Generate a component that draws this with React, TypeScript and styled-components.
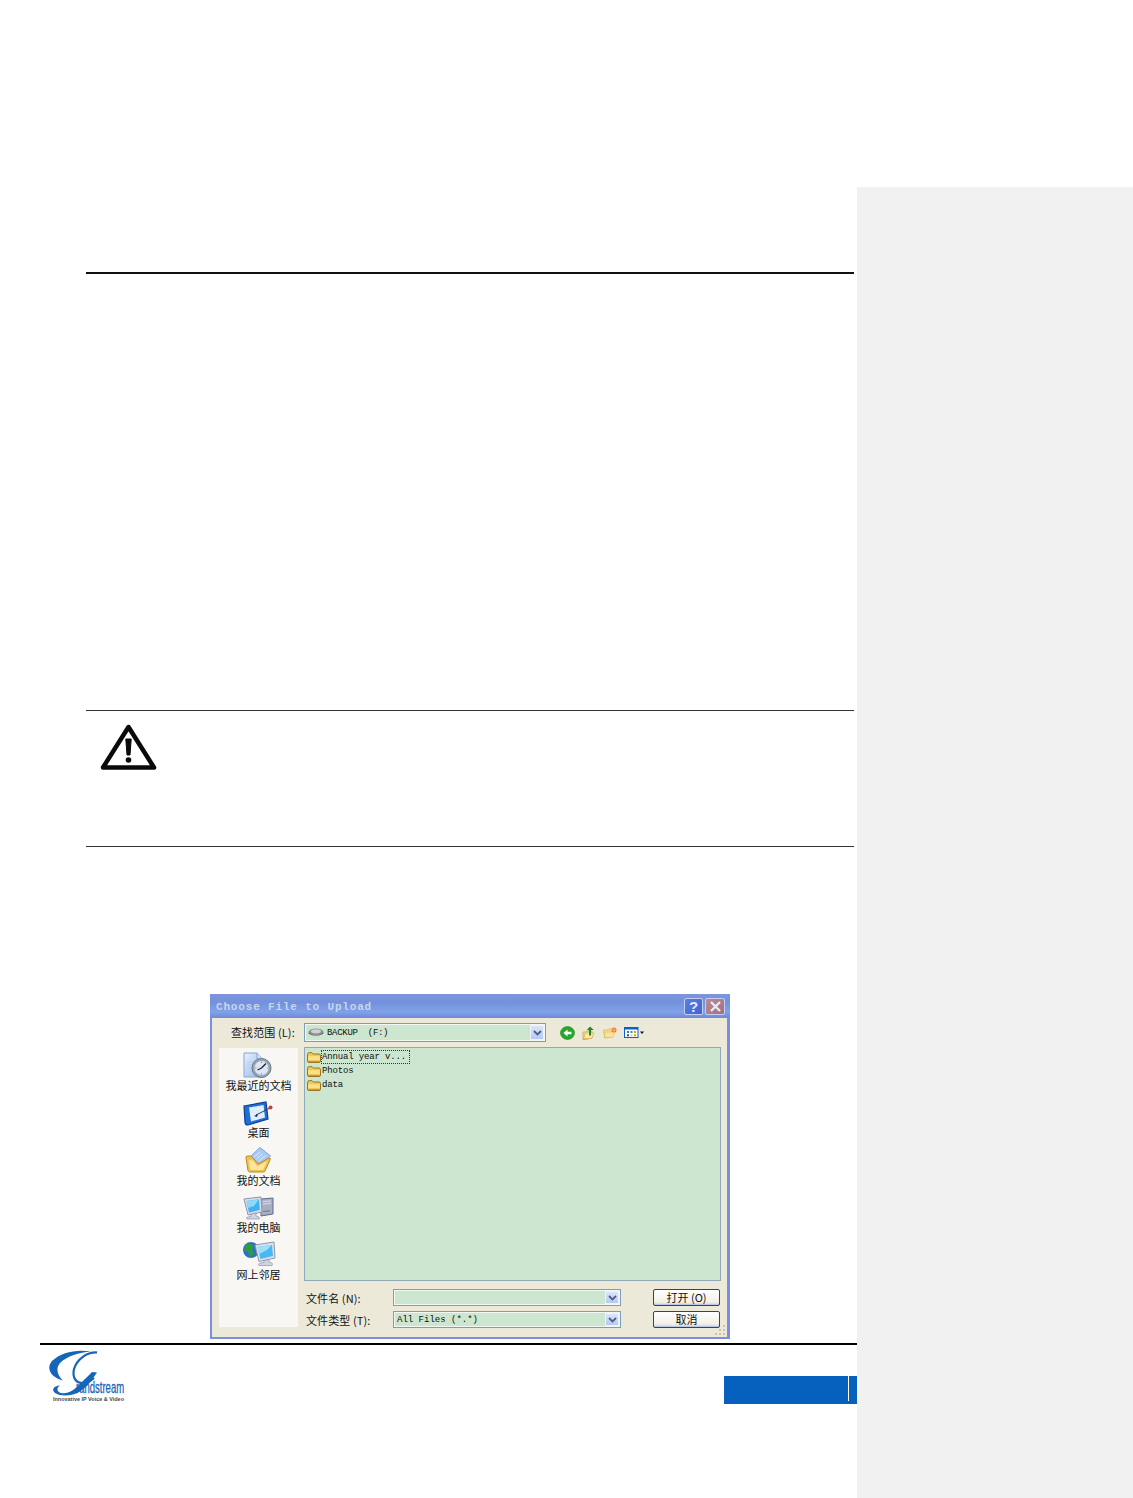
import React from "react";
import styled, { createGlobalStyle } from "styled-components";

const Global = createGlobalStyle`
  html, body { margin: 0; padding: 0; background: #fff; }
  body { font-family: "Liberation Sans", "Noto Sans CJK SC", sans-serif; }
`;

const Page = styled.div`
  display: flex;
  width: 1133px;
  height: 1498px;
  overflow: hidden;
`;
const Main = styled.main`
  width: 857px;
  padding-top: 272px;
  display: flex;
  flex-direction: column;
  align-items: flex-start;
  box-sizing: border-box;
`;
const CommentPane = styled.aside`
  width: 276px;
  margin-top: 187px;
  background: #f1f1f1;
`;
const TopRule = styled.hr`
  margin: 0 0 0 86px;
  width: 768px;
  height: 2px;
  border: 0;
  background: #111;
`;
const Warning = styled.section`
  margin: 436px 0 0 86px;
  width: 768px;
  height: 137px;
  box-sizing: border-box;
  border-top: 1px solid #333;
  border-bottom: 1px solid #333;
  padding: 12px 0 0 14px;
`;
const Dialog = styled.div`
  position: relative;
  margin: 147px 0 0 210px;
  width: 520px;
  height: 345px;
  box-sizing: border-box;
  border-left: 2px solid #7a8fdd;
  border-right: 3px solid #7a8fdd;
  border-bottom: 2px solid #7a8fdd;
  background: #ece9d8;
  display: flex;
  flex-direction: column;
`;
const TitleBar = styled.div`
  height: 24px;
  flex: none;
  margin: 0 -3px 0 -2px;
  padding: 0 5px 0 6px;
  display: flex;
  align-items: center;
  justify-content: space-between;
  background: linear-gradient(180deg, #7f95dc 0%, #7391dc 35%, #80a2e8 75%, #7089d8 100%);
`;
const Title = styled.span`
  font: bold 11px "Liberation Mono", monospace;
  letter-spacing: 0.83px;
  color: #c6d6ec;
  padding-top: 2px;
`;
const CaptionButtons = styled.div`
  display: flex;
  gap: 2px;
`;
const CaptionButton = styled.div<{ $kind: "help" | "close" }>`
  width: ${(p) => (p.$kind === "help" ? "19px" : "20px")};
  height: 17px;
  box-sizing: border-box;
  border: 1px solid #c3cfee;
  border-radius: 2px;
  display: flex;
  align-items: center;
  justify-content: center;
  background: ${(p) => (p.$kind === "help" ? "linear-gradient(135deg,#5a7fe0,#3f63d2)" : "linear-gradient(135deg,#b98a98,#a86f80)")};
  color: #e9ecf6;
  font: bold 15px "Liberation Sans", sans-serif;
`;
const LookRow = styled.div`
  height: 29px;
  flex: none;
  display: flex;
  align-items: center;
  padding: 0 0 0 19px;
  box-sizing: border-box;
`;
const Label = styled.span`
  font: 11px "Noto Sans CJK SC", sans-serif;
  letter-spacing: 0.1px;
  color: #111;
  white-space: pre;
  line-height: 14px;
`;
const LookLabel = styled(Label)`
  width: 73px;
  flex: none;
  margin-top: -2px;
`;
const Combo = styled.div<{ $w?: number }>`
  width: ${(p) => (p.$w ? `${p.$w}px` : "100%")};
  height: ${(p) => (p.$w ? "19px" : "17px")};
  flex: none;
  box-sizing: border-box;
  border: 1px solid #7f9db9;
  background: #cde6cf;
  box-shadow: inset 0 0 0 1px #f2f7f2;
  display: flex;
  align-items: center;
  justify-content: space-between;
  padding: 0 1px 0 3px;
  font: 9px "Liberation Mono", monospace;
  color: #111;
  white-space: pre;
`;
const ComboValue = styled.span`
  display: flex;
  align-items: center;
  gap: 3px;
  letter-spacing: -0.3px;
`;
const Arrow = styled.span`
  width: 14px;
  height: calc(100% - 2px);
  flex: none;
  background: linear-gradient(180deg, #dbe5fb, #b6c9f5);
  border: 1px solid #eef2fc;
  box-sizing: border-box;
  display: flex;
  align-items: center;
  justify-content: center;
`;
const Toolbar = styled.div`
  display: flex;
  align-items: center;
  gap: 7px;
  margin-left: 14px;
`;
const Middle = styled.div`
  display: flex;
  gap: 6px;
  padding-left: 7px;
`;
const Places = styled.nav`
  width: 79px;
  height: 279px;
  margin-top: 1px;
  flex: none;
  box-sizing: border-box;
  padding-top: 3px;
  background: #f8f7f3;
  display: flex;
  flex-direction: column;
  gap: 4.25px;
  align-items: center;
`;
const Place = styled.div`
  height: 43px;
  display: flex;
  flex-direction: column;
  align-items: center;
`;
const PlaceLabel = styled.span`
  margin-top: -1px;
  font: 11px/15px "Noto Sans CJK SC", sans-serif;
  color: #111;
  white-space: nowrap;
`;
const Right = styled.div`
  width: 417px;
  display: flex;
  flex-direction: column;
`;
const FileList = styled.div`
  height: 234px;
  box-sizing: border-box;
  border: 1px solid #8fa9b8;
  background: #cde6cf;
  padding: 2px 0 0 2px;
  display: flex;
  flex-direction: column;
`;
const FileRow = styled.div`
  height: 14px;
  display: flex;
  align-items: center;
`;
const FileName = styled.span<{ $selected?: boolean }>`
  font: 9px/12px "Liberation Mono", monospace;
  letter-spacing: -0.15px;
  color: #111;
  padding: 0 3px 0 0;
  border: 1px dotted ${(p) => (p.$selected ? "#333" : "transparent")};
  white-space: pre;
`;
const FormGrid = styled.div`
  display: grid;
  grid-template-columns: 87px 228px 67px;
  column-gap: 0;
  row-gap: 5px;
  padding: 8px 0 0 2px;
  align-items: center;
`;
const FormButton = styled.div`
  margin-left: 32px;
  width: 67px;
  height: 17px;
  box-sizing: border-box;
  border: 1px solid #1c4b78;
  border-radius: 2px;
  background: linear-gradient(180deg, #fff, #f2f0e6 80%, #d8d3c0);
  box-shadow: inset 0 -1px 0 #b9c6e6;
  font: 11px/14px "Noto Sans CJK SC", sans-serif;
  color: #111;
  text-align: center;
  white-space: pre;
`;
const Grip = styled.svg`
  position: absolute;
  right: 1px;
  bottom: 1px;
`;
const FooterRule = styled.hr`
  margin: 4px 0 0 40px;
  width: 817px;
  height: 2px;
  border: 0;
  background: #000;
`;
const Footer = styled.footer`
  width: 100%;
  display: flex;
  align-items: flex-start;
  justify-content: space-between;
  padding-left: 47px;
  box-sizing: border-box;
`;
const Logo = styled.svg`
  margin-top: 4px;
`;
const PageBar = styled.div`
  margin-top: 31px;
  width: 133px;
  height: 28px;
  box-sizing: border-box;
  padding-left: 124px;
  background: #0660bd;
`;
const PageDivider = styled.div`
  width: 1px;
  height: 25px;
  background: #fff;
`;

const Chevron = () => (
  <svg width="9" height="6" viewBox="0 0 9 6">
    <path d="M1 1l3.5 3.5L8 1" fill="none" stroke="#4d6185" strokeWidth="1.8" />
  </svg>
);

const SmallFolder = () => (
  <svg width="14" height="11" viewBox="0 0 14 11">
    <path d="M.5 2.5 Q.5 .7 2 .7 H5 L6.3 2 H12 Q13.5 2 13.5 3.5 V9 Q13.5 10.5 12 10.5 H2 Q.5 10.5 .5 9Z" fill="#f2c94f" stroke="#8f6b1e" strokeWidth=".9" />
    <path d="M1.2 4.2 H12.8 V8.4 H1.2Z" fill="#fbe08a" />
    <path d="M1.2 9.4 H12.8" stroke="#d9981f" strokeWidth="1.2" />
  </svg>
);

const RecentIcon = () => (
  <svg width="34" height="28" viewBox="0 0 34 28">
    <defs>
      <linearGradient id="rd" x1="0" y1="0" x2="1" y2="1">
        <stop offset="0" stopColor="#eaf2fc" />
        <stop offset="1" stopColor="#8fb4e8" />
      </linearGradient>
    </defs>
    <path d="M2 2 H15 L21 8 V26 H2Z" fill="url(#rd)" stroke="#8aa7d6" />
    <path d="M15 2 V8 H21" fill="#cfe0f6" stroke="#8aa7d6" />
    <path d="M4.500 11H14M4.500 14H12M4.500 17H11" stroke="#b7cdee" />
    <circle cx="19.500" cy="17" r="9.500" fill="#9aa6b4" stroke="#6b7786" />
    <circle cx="19.500" cy="17" r="7" fill="#dbe7f6" />
    <path d="M19.500 17 L24 12.500 M19.500 17 L15.500 19" stroke="#223" strokeWidth="1.300" />
    <path d="M19.500 10.500v1.500M19.500 22v1.500M13 17h1.500M25 17h1.500" stroke="#e2804a" />
  </svg>
);

const DesktopIcon = () => (
  <svg width="34" height="28" viewBox="0 0 34 28">
    <path d="M2 8 L24 4 L26 21 L6 27 Q3 27 3 24Z" fill="#1f6fd6" stroke="#0b3f96" strokeWidth="1.200" />
    <path d="M7 9.500 L21.500 7 L23 19.500 L9 23.500Z" fill="#dfeefb" />
    <path d="M14 17 L28 10" stroke="#2a3a6a" strokeWidth="1" />
    <path d="M12 18 L16 16 L15 19Z" fill="#1b2a5c" />
    <circle cx="28.500" cy="9.500" r="2" fill="#d33a30" />
  </svg>
);

const DocsIcon = () => (
  <svg width="34" height="28" viewBox="0 0 34 28">
    <path d="M7 12 L18 1.500 L28.500 10 L18 20Z" fill="#a9caf2" stroke="#7fa3d8" />
    <path d="M12 11 L18 6 M14.500 13 L20.500 8 M17 15 L23 10" stroke="#dfeafa" />
    <path d="M4 12 Q3.500 10 5.500 10 H9 L12 13 L16 18 L27 12 Q29 11.500 28 14 L23 25 Q22.500 26 21 26 H8 Q6.500 26 6 24.500Z" fill="#f0c24f" stroke="#b98c2a" />
    <path d="M6.500 14 L11 14.500 L15.500 20.500 L25 15 L21 24 H8.500Z" fill="#fde7a0" />
  </svg>
);

const ComputerIcon = () => (
  <svg width="34" height="28" viewBox="0 0 34 28">
    <path d="M19 6 L31 5 V21 L19 23Z" fill="#a9aec4" stroke="#5f6a8f" />
    <path d="M21 8.500 L29 8 M21 11 L29 10.500" stroke="#dde1ec" />
    <path d="M21 18.500 L28 17.800" stroke="#4d9a55" strokeWidth="1.200" />
    <path d="M2 6 L19 4 L20 19 L6 22Z" fill="#d8dde8" stroke="#8d96ad" />
    <path d="M4.500 8 L17 6.200 L17.800 17 L7 19.500Z" fill="#3fb2f2" />
    <path d="M4.500 8 L17 6.200 L12 13 L6 15Z" fill="#8fd8fa" />
    <path d="M9 21 L14 20 V23 Q19 24 17 26 H5 Q3 24 9 23.500Z" fill="#cfd4e0" stroke="#8d96ad" strokeWidth=".7" />
  </svg>
);

const NetworkIcon = () => (
  <svg width="34" height="28" viewBox="0 0 34 28">
    <circle cx="9" cy="10" r="8" fill="#2a72c8" />
    <path d="M4 4 Q9 3 12 6 L10 10 L12 14 L8 17 L6 12 L2 10Z" fill="#2f9a44" />
    <path d="M13 5 L32 2 L33 18 L17 21.500Z" fill="#dde2ec" stroke="#8d96ad" />
    <path d="M15.500 7 L30 4.700 L31 16 L18.500 19Z" fill="#47b8f2" />
    <path d="M15.500 7 L30 4.700 L25 10 L17 14Z" fill="#a0ddfa" />
    <path d="M22 20.500 L27 19.500 V22 Q32 23 30 25.500 H17 Q15 23 22 22.500Z" fill="#cfd4e0" stroke="#8d96ad" strokeWidth=".7" />
  </svg>
);

const BackIcon = () => (
  <svg width="15" height="14" viewBox="0 0 15 14">
    <ellipse cx="7.500" cy="7" rx="7" ry="6.500" fill="#27a62c" stroke="#1b8a22" strokeWidth=".6" />
    <path d="M3.500 7 L7.500 3.500 V5.700 H11.500 V8.300 H7.500 V10.500Z" fill="#fff" />
  </svg>
);
const UpIcon = () => (
  <svg width="14" height="14" viewBox="0 0 14 14">
    <path d="M1 6 H4 L5 5 H10 V12 L3 13.500 H1Z" fill="#f5dc8d" stroke="#cda544" strokeWidth=".8" />
    <path d="M3.500 7 H12 L9.500 12.500 H1.500Z" fill="#fbe9ab" stroke="#cda544" strokeWidth=".6" />
    <path d="M8 9.500 V2.500" stroke="#1d8c24" strokeWidth="2" />
    <path d="M4.800 4 L8 .5 L11.800 4Z" fill="#1d8c24" />
  </svg>
);
const NewFolderIcon = () => (
  <svg width="14" height="12" viewBox="0 0 14 12">
    <path d="M.5 3 H4 L5 2 H9 V10 L3 11 H1.500Z" fill="#f5dc8d" stroke="#d9b860" strokeWidth=".7" />
    <path d="M2 5 H12 L9.500 10.500 H1.500Z" fill="#fbe49a" stroke="#d9b860" strokeWidth=".6" />
    <circle cx="11" cy="3" r="2.500" fill="#ef7a2e" />
    <path d="M11 .2v5.600M8.300 3h5.400" stroke="#fbc08a" strokeWidth=".7" />
  </svg>
);
const ViewsIcon = () => (
  <svg width="20" height="11" viewBox="0 0 20 11">
    <rect x=".5" y=".5" width="13.500" height="10" fill="#fff" stroke="#0a5fd0" />
    <rect x=".5" y=".5" width="13.500" height="2" fill="#0a5fd0" />
    <rect x="3" y="4" width="2" height="2" fill="#3a6fc8" />
    <rect x="6.500" y="4" width="2" height="2" fill="#3aa04a" />
    <rect x="10" y="4" width="2" height="2" fill="#d99a2a" />
    <rect x="3" y="7.300" width="2" height="2" fill="#2a4a9a" />
    <rect x="6.500" y="7.300" width="2" height="2" fill="#c9c9c9" />
    <rect x="10" y="7.300" width="2" height="2" fill="#d99a2a" />
    <path d="M16 4.500 H20 L18 7Z" fill="#111" />
  </svg>
);
const DriveIcon = () => (
  <svg width="16" height="9" viewBox="0 0 16 9">
    <ellipse cx="8" cy="4" rx="7.500" ry="3.500" fill="#8c9194" />
    <ellipse cx="8" cy="3.300" rx="5" ry="2" fill="#cfd2d4" />
    <path d="M.5 4.500 Q8 10.500 15.500 4.500 V5.500 Q8 10 .5 5.500Z" fill="#4d5256" />
  </svg>
);

const places = [
  { label: "我最近的文档", Icon: RecentIcon },
  { label: "桌面", Icon: DesktopIcon },
  { label: "我的文档", Icon: DocsIcon },
  { label: "我的电脑", Icon: ComputerIcon },
  { label: "网上邻居", Icon: NetworkIcon },
];
const files = ["Annual year v...", "Photos", "data"];

export default function App() {
  return (
    <Page>
      <Global />
      <Main>
        <TopRule />
        <Warning>
          <svg width="58" height="48" viewBox="0 0 58 48">
            <path d="M28.500 4 L54 44.500 H3Z" fill="#fff" stroke="#0a0a0a" strokeWidth="4.500" strokeLinejoin="round" />
            <path d="M25.800 16 H31.200 L30 32 H27Z" fill="#0a0a0a" stroke="#0a0a0a" strokeWidth="1" strokeLinejoin="round" />
            <circle cx="28.500" cy="37" r="2.800" fill="#0a0a0a" />
          </svg>
        </Warning>
        <Dialog>
          <TitleBar>
            <Title>Choose File to Upload</Title>
            <CaptionButtons>
              <CaptionButton $kind="help">?</CaptionButton>
              <CaptionButton $kind="close">
                <svg width="11" height="11" viewBox="0 0 11 11">
                  <path d="M1 1l9 9M10 1l-9 9" stroke="#e9ecf6" strokeWidth="2.400" />
                </svg>
              </CaptionButton>
            </CaptionButtons>
          </TitleBar>
          <LookRow>
            <LookLabel>查找范围 (L):</LookLabel>
            <Combo $w={242}>
              <ComboValue>
                <DriveIcon />
                {"BACKUP  (F:)"}
              </ComboValue>
              <Arrow>
                <Chevron />
              </Arrow>
            </Combo>
            <Toolbar>
              <BackIcon />
              <UpIcon />
              <NewFolderIcon />
              <ViewsIcon />
            </Toolbar>
          </LookRow>
          <Middle>
            <Places>
              {places.map(({ label, Icon }) => (
                <Place key={label}>
                  <Icon />
                  <PlaceLabel>{label}</PlaceLabel>
                </Place>
              ))}
            </Places>
            <Right>
              <FileList>
                {files.map((f, i) => (
                  <FileRow key={f}>
                    <SmallFolder />
                    <FileName $selected={i === 0}>{f}</FileName>
                  </FileRow>
                ))}
              </FileList>
              <FormGrid>
                <Label>文件名 (N):</Label>
                <Combo>
                  <span />
                  <Arrow>
                    <Chevron />
                  </Arrow>
                </Combo>
                <FormButton>打开 (O)</FormButton>
                <Label>文件类型 (T):</Label>
                <Combo>
                  <span>All Files (*.*)</span>
                  <Arrow>
                    <Chevron />
                  </Arrow>
                </Combo>
                <FormButton>取消</FormButton>
              </FormGrid>
            </Right>
          </Middle>
          <Grip width="11" height="11" viewBox="0 0 11 11">
            <path d="M8 0h2v2H8zM4 4h2v2H4zM8 4h2v2H8zM0 8h2v2H0zM4 8h2v2H4zM8 8h2v2H8z" fill="#c8c4b0" />
          </Grip>
        </Dialog>
        <FooterRule />
        <Footer>
          <Logo width="90" height="54" viewBox="0 0 90 54">
            <path d="M44 2.500 C30 0 14 3 5 12 C-1 19 3 28 16 31.500 C11 27 8 20 13 14 C20 7 32 3.500 44 2.500Z" fill="#1565b8" />
            <path d="M50 3.500 C40 3 30 10 27 20 C25 29 29 35 38 34 C42 33 45 31 47 29" fill="none" stroke="#1565b8" strokeWidth="2.200" />
            <path d="M50 23.500 C45 31 40 38 33 42.500 C26 47 14 48 8 44 C4.500 41 6 37 13 36.500 C9 39 10 43 14 44 C21 45.500 27 41 32 36 C36 32 41 27 45 23Z" fill="#1565b8" />
            <g transform="translate(29 43.500) scale(.56 1)">
              <text fontFamily="Liberation Sans, sans-serif" fontSize="17" stroke="#1565b8" strokeWidth=".3" fill="#1565b8">randstream</text>
            </g>
            <text x="6" y="51.500" fontFamily="Liberation Sans, sans-serif" fontSize="5.200" fontWeight="bold" fill="#4a4a4a" textLength="71" lengthAdjust="spacingAndGlyphs">Innovative IP Voice &amp; Video</text>
          </Logo>
          <PageBar>
            <PageDivider />
          </PageBar>
        </Footer>
      </Main>
      <CommentPane />
    </Page>
  );
}
